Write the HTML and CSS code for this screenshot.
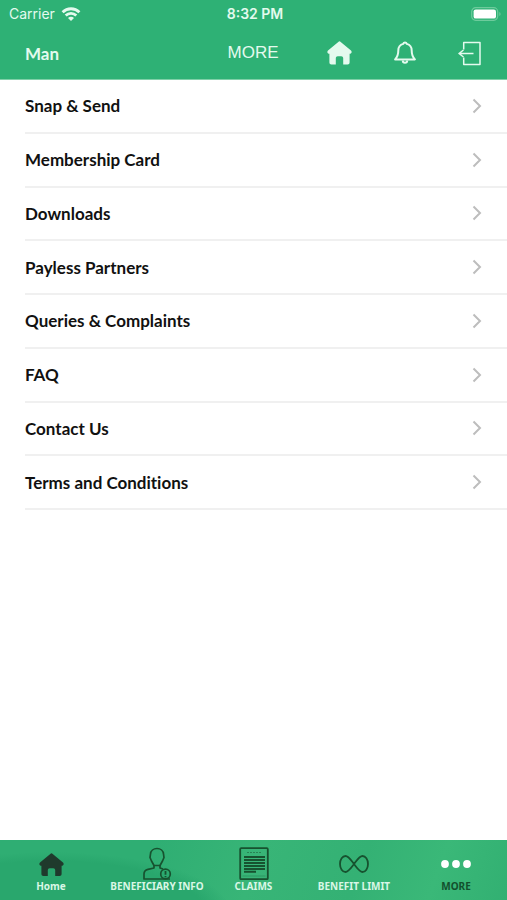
FILE: index.html
```html
<!DOCTYPE html>
<html lang="en">
<head>
<meta charset="utf-8">
<meta name="viewport" content="width=device-width, initial-scale=1">
<title>More</title>
<link rel="stylesheet" href="styles.css">
</head>
<body>
<header class="top">
  <div class="status">
    <div class="carrier">
      <span>Carrier</span>
      <svg width="20" height="16" viewBox="0 0 20 16" fill="none" stroke="currentColor" stroke-width="2.8" aria-hidden="true">
        <path d="M1.6 6.2A12 12 0 0 1 18.4 6.2"/>
        <path d="M4.7 9.6A7.6 7.6 0 0 1 15.3 9.6"/>
        <path d="M10 15 7 12A4.2 4.2 0 0 1 13 12Z" fill="currentColor" stroke="none"/>
      </svg>
    </div>
    <time class="clock">8:32 PM</time>
    <svg class="battery" width="30" height="14" viewBox="0 0 30 14" aria-hidden="true">
      <rect x=".7" y=".7" width="26" height="12.6" rx="4" fill="none" stroke="#6dcb9c" stroke-width="1.2"/>
      <rect x="2.6" y="2.4" width="22.4" height="9.2" rx="2.2" fill="#fff"/>
      <path d="M28.3 5v4q1.3-.6 1.3-2t-1.3-2Z" fill="#6dcb9c"/>
    </svg>
  </div>
  <nav class="bar" aria-label="Toolbar">
    <span class="user">Man</span>
    <h1 class="title">MORE</h1>
    <div class="actions">
      <button class="action" aria-label="Home">
        <svg width="25" height="24" viewBox="0 0 25 24" fill="currentColor"><path d="M11.3.9a1.8 1.8 0 0 1 2.4 0L24 9.6c1.1 1 .8 3-.8 3.1h-.6v8.9c0 1.2-.8 2-2 2h-4.4v-6.3c0-1.3-.8-2-2-2h-3.4c-1.2 0-2 .7-2 2v6.3H4.4c-1.2 0-2-.8-2-2v-8.9h-.6C.2 12.6-.1 10.6 1 9.6Z"/></svg>
      </button>
      <button class="action" aria-label="Notifications">
        <svg width="22" height="24" viewBox="0 0 22 24" fill="none" stroke="currentColor" stroke-width="2" stroke-linejoin="round"><path d="M9.2 2.9a1.9 1.9 0 0 1 3.6 0c3 .8 4.9 3.3 4.9 6.600 0 5.200 1.300 7 3.200 8.900H1.100c1.900-1.900 3.200-3.700 3.200-8.900 0-3.300 1.900-5.800 4.900-6.600Z"/><path d="M8.800 19.500a2.200 2.200 0 0 0 4.400 0"/></svg>
      </button>
      <button class="action" aria-label="Log out">
        <svg width="23" height="25" viewBox="0 0 23 25" fill="none" stroke="currentColor" stroke-width="1.5" stroke-linejoin="round"><path d="M5.700 8.500V1.500H22v22H5.700v-7"/><path d="M15.500 12.500H1M5.500 9 1 12.500 5.500 16"/></svg>
      </button>
    </div>
  </nav>
</header>

<main class="content">
  <ul class="menu">
    <li><a class="row" href="#snap">Snap &amp; Send<svg class="chevron" viewBox="0 0 10 16"><path d="m1.5 1.5 6.5 6.5-6.5 6.5"/></svg></a></li>
    <li><a class="row" href="#card">Membership Card<svg class="chevron" viewBox="0 0 10 16"><path d="m1.5 1.5 6.5 6.5-6.5 6.5"/></svg></a></li>
    <li><a class="row" href="#downloads">Downloads<svg class="chevron" viewBox="0 0 10 16"><path d="m1.5 1.5 6.5 6.5-6.5 6.5"/></svg></a></li>
    <li><a class="row" href="#partners">Payless Partners<svg class="chevron" viewBox="0 0 10 16"><path d="m1.5 1.5 6.5 6.5-6.5 6.5"/></svg></a></li>
    <li><a class="row" href="#queries">Queries &amp; Complaints<svg class="chevron" viewBox="0 0 10 16"><path d="m1.5 1.5 6.5 6.5-6.5 6.5"/></svg></a></li>
    <li><a class="row" href="#faq">FAQ<svg class="chevron" viewBox="0 0 10 16"><path d="m1.5 1.5 6.5 6.5-6.5 6.5"/></svg></a></li>
    <li><a class="row" href="#contact">Contact Us<svg class="chevron" viewBox="0 0 10 16"><path d="m1.5 1.5 6.5 6.5-6.5 6.5"/></svg></a></li>
    <li><a class="row" href="#terms">Terms and Conditions<svg class="chevron" viewBox="0 0 10 16"><path d="m1.5 1.5 6.5 6.5-6.5 6.5"/></svg></a></li>
  </ul>
</main>

<nav class="tabs" aria-label="Main">
  <a class="tab" href="#home">
    <svg width="25" height="34" viewBox="0 -7 25 34" fill="#1f3a2c"><path d="M11.3.9a1.8 1.8 0 0 1 2.4 0L24 9.6c1.1 1 .8 3-.8 3.1h-.6v8.4c0 1.2-.8 2-2 2h-4.4v-5.800c0-1.300-.8-2-2-2h-3.400c-1.200 0-2 .7-2 2v5.800H4.400c-1.200 0-2-.8-2-2v-8.400h-.6C.2 12.600-.1 10.600 1 9.600Z"/></svg>
    <span>Home</span>
  </a>
  <a class="tab" href="#beneficiary">
    <svg width="30" height="34" viewBox="0 0 30 34" fill="none" stroke="#17522f" stroke-width="1.7" stroke-linejoin="round"><path d="M15 2.500c-3.500 0-6.300 2.300-6.500 5.500l-.5 3.500 1.500 3.500 2.500 4.500h6l2.500-4.500 1.500-3.500-.5-3.500c-.2-3.200-3-5.500-6.500-5.500Z"/><path d="M12 19.500v2.500l-6 1.300c-2.500.6-4 2.200-4 4.700v5h26M18 19.500v2.500l3 1"/><circle cx="23.500" cy="28" r="4.800"/><path d="M23.500 25v3.800M23.500 30v1.200" stroke-width="1.800"/></svg>
    <span>BENEFICIARY INFO</span>
  </a>
  <a class="tab" href="#claims">
    <svg width="30" height="34" viewBox="0 0 30 34" fill="none" stroke="#17522f"><rect x="1.200" y="2.200" width="27.600" height="31" rx="1" stroke-width="1.800"/><path d="M8 6.500h14" stroke-width="1" stroke-dasharray="2 1" opacity=".5"/><path d="M5 11h21M5 14h21M5 17h21M5 20h21M5 23h21M5 25.700h12" stroke-width="1.900"/><path d="M3.500 30h23" stroke-width="1" opacity=".3"/></svg>
    <span>CLAIMS</span>
  </a>
  <a class="tab" href="#limit">
    <svg width="30" height="34" viewBox="0 0 30 34" fill="none" stroke="#17522f" stroke-width="1.8"><path d="M15 18C11.500 13.500 9.500 10 6.500 10S1 13.500 1 18 3.500 26 6.500 26s5-3.500 8.500-8S20.500 10 23.500 10 29 13.500 29 18 26.500 26 23.500 26s-5-3.500-8.500-8Z"/></svg>
    <span>BENEFIT LIMIT</span>
  </a>
  <a class="tab tab-current" href="#more" aria-current="page">
    <svg width="30" height="34" viewBox="0 0 30 34" fill="#fff"><circle cx="4" cy="18" r="3.9"/><circle cx="15" cy="18" r="3.9"/><circle cx="26" cy="18" r="3.9"/></svg>
    <span>MORE</span>
  </a>
</nav>
</body>
</html>
```
FILE: styles.css
```css
* { box-sizing: border-box; }

body {
  margin: 0;
  min-height: 100vh;
  display: flex;
  flex-direction: column;
  background: #fff;
  color: #111;
  font-family: Lato, "Noto Sans", sans-serif;
  font-variant-ligatures: none;
}

.top {
  background: #2eb175;
  color: #e4faee;
  border-bottom: 1px solid #7fd0a8;
}

.status {
  display: grid;
  grid-template-columns: 1fr auto 1fr;
  align-items: center;
  height: 27px;
  padding: 0 6px 0 9px;
  font: 14px/20px Inter, sans-serif;
}

.carrier { display: flex; align-items: center; gap: 6px; }
.clock { font-weight: 600; }
.battery { justify-self: end; }

.bar {
  display: grid;
  grid-template-columns: 1fr auto 1fr;
  align-items: center;
  height: 52px;
  padding: 0 26px 0 25px;
}

.user { font-size: 17px; font-weight: 700; }
.title { margin: 0; font: 17px/24px "Liberation Sans", sans-serif; }

.actions {
  display: flex;
  justify-content: flex-end;
  align-items: center;
  gap: 42px;
}

.action {
  display: flex;
  padding: 0;
  border: 0;
  background: none;
  color: inherit;
  cursor: pointer;
}

.content { flex: 1; }

.menu {
  display: grid;
  grid-auto-rows: 1fr;
  min-height: 430px;
  margin: 0;
  padding: 0 0 0 25px;
  list-style: none;
}

.menu li { display: flex; border-bottom: 2px solid #f0f0f0; }

.row {
  flex: 1;
  display: flex;
  align-items: center;
  justify-content: space-between;
  padding-right: 25px;
  color: inherit;
  font-size: 17px;
  font-weight: 700;
  text-decoration: none;
}

.chevron {
  width: 10px;
  height: 16px;
  fill: none;
  stroke: #bdbdbd;
  stroke-width: 2;
}

.tabs {
  display: grid;
  grid-template-columns: 102fr 110fr 83fr 118fr 86fr;
  height: 60px;
  padding: 6px 8px 0 0;
  background:
    radial-gradient(ellipse 180px 60px at 10% 120%, #29a76d 0%, #29a76d 85%, transparent 100%),
    linear-gradient(110deg, #2fae73 0%, #2fae73 30%, #38b577 50%, #34b174 70%, #3ab878 85%, #32b072 100%);
}

.tab {
  display: flex;
  flex-direction: column;
  align-items: center;
  color: #d9f7e6;
  font: 700 10px/12px "Noto Sans", sans-serif;
  text-decoration: none;
  white-space: nowrap;
}

.tab-current { color: #12502d; }
```
